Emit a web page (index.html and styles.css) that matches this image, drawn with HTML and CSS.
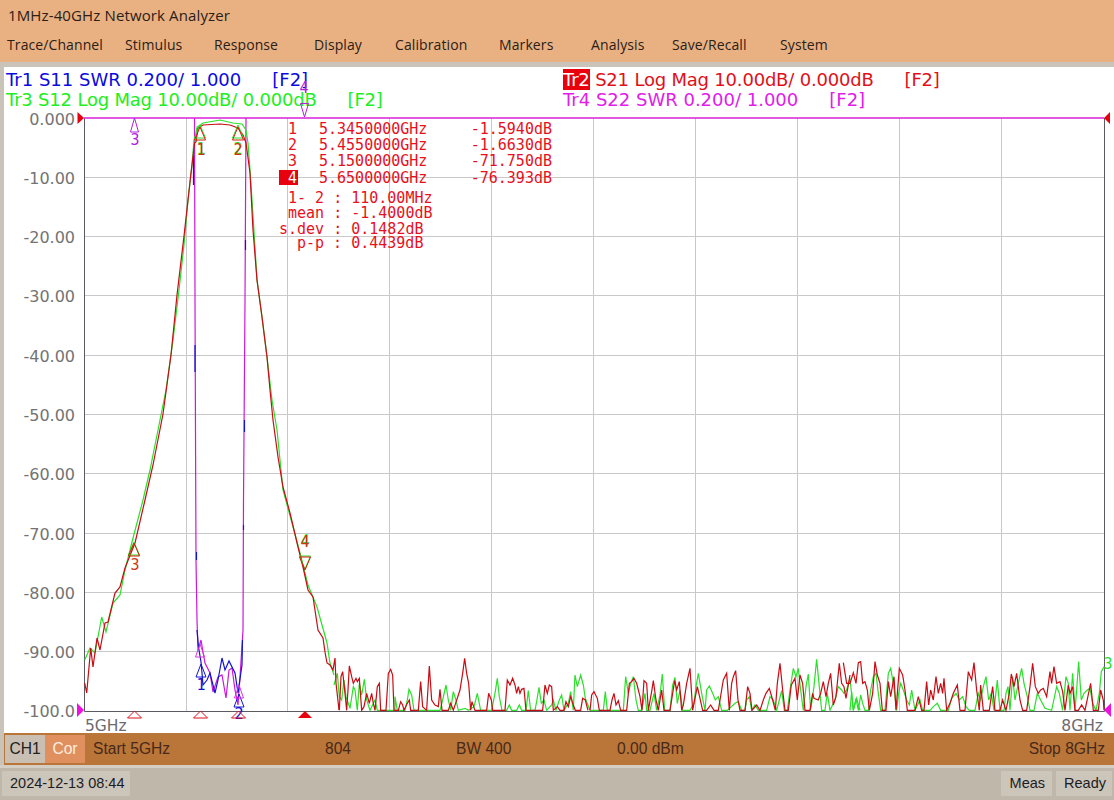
FILE: index.html
```html
<!DOCTYPE html>
<html lang="en">
<head>
    <meta charset="UTF-8">
    <title>1MHz-40GHz Network Analyzer</title>
    <link rel="stylesheet" href="styles.css">
</head>
<body>
    <header class="top">
        <div class="title">1MHz-40GHz Network Analyzer</div>
        <nav class="menu">
            <span>Trace/Channel</span>
            <span>Stimulus</span>
            <span>Response</span>
            <span>Display</span>
            <span>Calibration</span>
            <span>Markers</span>
            <span>Analysis</span>
            <span>Save/Recall</span>
            <span>System</span>
        </nav>
    </header>

    <main class="screen">
        <div class="traces">
            <div class="trace tr1"><span>Tr1 S11 SWR 0.200/ 1.000</span><span>[F2]</span></div>
            <div class="trace tr2"><span><b>Tr2</b> S21 Log Mag 10.00dB/ 0.000dB</span><span>[F2]</span></div>
            <div class="trace tr3"><span>Tr3 S12 Log Mag 10.00dB/ 0.000dB</span><span>[F2]</span></div>
            <div class="trace tr4"><span>Tr4 S22 SWR 0.200/ 1.000</span><span>[F2]</span></div>
        </div>

        <!-- viewBox uses page coordinates so values can be read straight off the screen -->
        <svg class="plot" viewBox="4 118 1110 615" width="1110" height="615">
            <g class="grid">
                <path d="M84 177.500H1104M84 236.500H1104M84 295.500H1104M84 355.500H1104M84 414.500H1104M84 473.500H1104M84 533.500H1104M84 592.500H1104M84 651.500H1104"/>
                <path d="M186.500 118V711M287.500 118V711M389.500 118V711M491.500 118V711M593.500 118V711M695.500 118V711M797.500 118V711M899.500 118V711M1001.500 118V711"/>
            </g>
            <path class="frame" d="M84.500 118V711.500H1104.500V118"/>

            <g class="axis">
                <text x="75" y="125">0.000</text>
                <text x="75" y="184">-10.00</text>
                <text x="75" y="243">-20.00</text>
                <text x="75" y="302">-30.00</text>
                <text x="75" y="362">-40.00</text>
                <text x="75" y="421">-50.00</text>
                <text x="75" y="480">-60.00</text>
                <text x="75" y="540">-70.00</text>
                <text x="75" y="599">-80.00</text>
                <text x="75" y="658">-90.00</text>
                <text x="75" y="717">-100.0</text>
            </g>
            <text class="freq" x="85" y="731">5GHz</text>
            <text class="freq end" x="1103" y="731">8GHz</text>

            <!-- S22 and S11 -->
            <polyline class="magenta" points="194.500,118 195,300 196,560 197,620 198,650 201,640 203,652 205,663 210,673 213,692 218,677 222,675 226,698 229,670 232,668 235,690 238,705 240,677 243,630 243.500,500 245,300 246,118"/>
            <polyline class="blue" points="197,630 198.500,647 201,662 202,673 203,685 207,680 210,673 215,693 218,680 222,658 225,670 229,661 235,673 238,693 242,665 242.500,640"/>
            <path class="blue" d="M193.500 155V185M195 345V372M196.500 552V560M245.500 240V250M244.500 420V432M243.500 525V530"/>
            <path class="top-line" d="M84 118H1104"/>

            <!-- S12 -->
            <polyline class="green" points="84.700,660 90,648 95,653 101.700,617 106,632 113,603 120,595 125,570 132,542 143,500 150,470 158,430 166,390 173,340 179,290 184,245 188,200 192,165 194,140 195,138 197,127 203,123 220,120 233,123 242,124 246,130 248,143 250,170 253,215 257,280 262,317 267,357 272,400 277,430 283,490 292,523 300,553 308,585 317,607 327,643 330,663 334,675"/>
            <g class="scaled" transform="translate(320 650) scale(.3333)">
                <polyline class="green" points="42,105 52,70 58,140 65,150 72,90 78,140 90,175 100,110 105,120 112,181 118,100 125,135 133,88 140,150 150,181 165,150 172,181 225,181 225,140 232,181 255,181 262,150 267,118 275,135 282,181 360,181 368,150 378,105 385,150 392,181 400,125 408,150 415,181 435,175 445,181 462,170 472,130 482,181 515,181 525,130 532,85 538,140 546,181 560,181 568,165 575,181 590,181 598,165 605,181 618,181 625,122 632,181 645,181 650,155 657,112 664,160 672,150 680,181 695,165 700,150 708,181 718,150 725,135 732,181 745,160 752,125 760,181 765,75 772,110 782,75 790,105 796,145 810,181"/>
            </g>
            <g class="scaled" transform="translate(590 650) scale(.3333)">
                <polyline class="green" points="0,181 40,181 46,125 52,181 100,181 107,80 115,130 122,100 130,80 138,150 145,181 155,181 165,130 170,181 180,181 192,130 200,181 210,135 217,72 224,181 240,181 248,105 255,82 262,160 270,120 278,181 300,181 312,160 318,110 325,70 335,130 345,181 350,120 358,108 368,130 376,150 385,140 395,181 412,181 435,160 445,155 455,181 465,181 470,150 478,140 485,181 495,165 505,181 530,181 540,140 550,150 560,181 568,150 575,122 583,181 592,181 600,120 610,55 618,80 625,55 632,120 640,181 648,110 655,72 662,181 672,110 680,28 688,110 695,181 705,181 712,130 720,181 735,150 745,110 755,120 762,130 770,120 780,85 790,181 800,145 810,181"/>
            </g>
            <g class="scaled" transform="translate(850 650) scale(.3333)">
                <polyline class="green" points="0,181 5,125 10,181 18,145 25,181 32,135 38,160 45,181 55,181 62,120 70,80 78,70 85,130 92,181 105,181 115,70 122,55 130,100 140,181 146,130 152,100 160,120 170,150 178,165 185,120 195,181 210,150 218,181 240,181 250,170 262,160 272,181 295,181 305,145 318,130 328,150 338,140 348,170 358,181 375,181 385,130 392,150 400,110 408,80 416,150 424,130 432,181 442,90 450,181 462,181 468,130 474,110 480,181 488,80 495,150 505,100 515,55 522,100 532,140 540,181 552,181 562,130 572,150 585,175 605,181 620,110 628,130 638,181 648,80 655,100 660,181 668,70 675,181 680,120 686,35 694,150 702,130 712,120 720,115 728,160 738,181 748,130 754,65 762,50"/>
            </g>

            <!-- S21 -->
            <polyline class="red" points="84.700,683 86.700,693 90.700,648 93,667 97,638 100,650 105,623 108,622 115,593 120,587 125,568 135,543 145,500 153,465 163,414 171,355 177,295 184,236 191,173 194.600,143 196,142 198,128 203,125 220,124 230,125 238,128 243,135 246,143 250,173 253,230 257,280 262,317 267,357 270,390 273,420 278,457 283,487 290,513 298,547 303,567 308,590 313,597 318,630 323,638 325,652 327,663 330,665 333,670 335,658 336,683 339,710"/>
            <g class="scaled" transform="translate(320 650) scale(.3333)">
                <polyline class="red" points="58,181 63,80 68,65 75,130 80,181 84,120 88,48 95,80 100,100 108,85 112,95 118,85 125,181 132,170 140,130 148,160 155,130 160,160 165,181 172,110 178,100 182,181 198,181 205,70 212,58 218,75 222,181 235,181 242,155 248,165 252,181 262,160 268,150 272,181 295,181 302,95 308,170 320,181 328,48 335,150 345,165 355,170 360,118 366,181 385,181 392,160 400,181 420,120 428,70 434,25 440,70 446,100 452,181 456,155 465,181 500,181 506,130 514,150 518,181 555,181 562,90 570,105 578,85 585,105 590,130 595,110 600,130 605,118 612,115 618,181 668,181 675,105 682,130 688,105 695,110 700,181 712,170 720,181 732,181 738,155 745,170 752,140 760,165 766,181 782,181 788,145 796,150 804,181"/>
            </g>
            <g class="scaled" transform="translate(590 650) scale(.3333)">
                <polyline class="red" points="0,181 5,135 12,125 22,145 28,181 60,181 66,150 72,130 78,165 85,152 92,181 110,181 118,100 125,95 132,85 140,100 150,140 156,181 162,92 170,100 175,181 185,125 190,92 198,150 205,181 215,120 222,181 240,181 248,130 254,92 260,120 268,95 275,181 280,165 290,100 300,55 308,181 312,160 322,110 330,145 338,181 350,181 362,165 372,181 385,181 395,120 400,90 410,70 418,181 425,100 430,80 437,62 444,150 450,181 465,181 473,110 480,130 486,181 500,165 510,181 520,150 528,130 538,115 548,150 556,181 562,100 570,40 578,120 585,181 595,181 604,105 615,85 622,150 630,75 638,100 645,181 660,181 668,130 672,145 685,150 692,130 700,95 708,140 715,100 722,70 730,165 738,140 748,40 755,100 762,110 768,145 775,105 780,75"/>
            </g>
            <g class="scaled" transform="translate(850 650) scale(.3333)">
                <polyline class="red" points="-20,38 -10,100 0,100 10,68 18,100 25,38 32,35 38,100 45,95 52,120 58,181 68,130 75,35 82,75 90,100 97,181 108,181 115,95 122,140 132,80 138,181 148,55 158,75 165,120 172,181 195,181 205,140 215,181 222,181 230,95 236,165 242,120 250,150 258,80 265,130 272,100 278,130 282,85 290,181 300,160 310,130 322,105 330,181 345,181 355,65 365,90 372,38 380,120 388,181 392,105 400,181 418,181 428,110 435,181 450,181 458,150 468,181 478,130 484,72 492,110 500,70 510,150 518,181 530,181 540,110 548,40 556,110 565,130 572,120 580,115 590,140 600,65 605,100 612,50 620,100 630,95 638,125 645,181 655,105 660,130 668,110 675,181 685,181 695,165 705,181 722,100 730,181 745,181 752,120 760,150 762,181"/>
            </g>

            <!-- markers on the traces -->
            <g class="mk-green">
                <path d="M200 125L194.500 138H205.500ZM238 125L232.500 138H243.500ZM134 542L128.500 555H139.500ZM305 569L299.500 556H310.500Z"/>
            </g>
            <g class="mk-red">
                <path d="M200 127L194.500 140H205.500ZM238 127L232.500 140H243.500ZM134 543L128.500 556H139.500ZM305 570L299.500 557H310.500Z"/>
            </g>
            <g class="mk-num">
                <text class="n-green" x="201" y="154">1</text>
                <text class="n-red" x="201" y="155">1</text>
                <text class="n-green" x="238" y="154">2</text>
                <text class="n-red" x="238" y="155">2</text>
                <text class="n-red" x="135" y="570">3</text>
                <text class="n-green" x="305" y="546">4</text>
                <text class="n-red" x="305" y="547">4</text>
                <text class="n-blue" x="201" y="690">1</text>
                <text class="n-blue" x="239" y="719">2</text>
                <text class="n-purple" x="135" y="145">3</text>
                <text class="n-purple" x="304" y="93">4</text>
                <text class="n-green" x="1108" y="669">3</text>
            </g>
            <path class="mk-blue" d="M201 664L196 677H206ZM239 694L234 707H244Z"/>
            <path class="mk-magenta" d="M200 644L195.500 657H204.500ZM239 685L234.500 698H243.500Z"/>
            <path class="mk-purple" d="M134.500 118L130.500 132H138.500ZM304.500 117L300.500 103.500H308.500Z"/>

            <!-- stimulus marker flags below the axis -->
            <path class="flag" d="M134.500 711L127.500 718H141.500ZM200.500 711L193.500 718H207.500ZM238.500 711L231.500 718H245.500Z"/>
            <path class="flag-on" d="M305 711L298 718H312Z"/>

            <!-- reference arrows -->
            <path class="arrow-red" d="M77.500 112L84 118L77.500 124ZM1110 112L1104 118L1110 124Z"/>
            <path class="arrow-magenta" d="M77 703L84 710L77 717ZM1111 703L1104 710L1111 717Z"/>

            <!-- marker readout -->
            <g class="readout">
                <text x="288" y="134">1</text><text x="319" y="134">5.3450000GHz</text><text class="end" x="552" y="134">-1.5940dB</text>
                <text x="288" y="150">2</text><text x="319" y="150">5.4550000GHz</text><text class="end" x="552" y="150">-1.6630dB</text>
                <text x="288" y="166">3</text><text x="319" y="166">5.1500000GHz</text><text class="end" x="552" y="166">-71.750dB</text>
                <rect class="active" x="279" y="170" width="19" height="15"/>
                <text class="on" x="288" y="183">4</text><text x="319" y="183">5.6500000GHz</text><text class="end" x="552" y="183">-76.393dB</text>
                <text x="288" y="203">1- 2 : 110.00MHz</text>
                <text x="288" y="218">mean : -1.4000dB</text>
                <text x="279" y="234">s.dev : 0.1482dB</text>
                <text x="297" y="248">p-p : 0.4439dB</text>
            </g>
        </svg>
    </main>

    <section class="channel">
        <span class="ch-tag">CH1</span>
        <span class="cor-tag">Cor</span>
        <span class="ch-start">Start 5GHz</span>
        <span class="ch-points">804</span>
        <span class="ch-bw">BW 400</span>
        <span class="ch-power">0.00 dBm</span>
        <span class="ch-stop">Stop 8GHz</span>
    </section>

    <footer class="status">
        <span class="cell date">2024-12-13 08:44</span>
        <span class="cell meas">Meas</span>
        <span class="cell">Ready</span>
    </footer>
</body>
</html>
```

FILE: styles.css
```css
html, body {
    margin: 0;
    padding: 0;
}
body {
    width: 1114px;
    height: 800px;
    overflow: hidden;
    display: flex;
    flex-direction: column;
    background: #c9c3ba;
    font-family: "Liberation Sans", Arial, sans-serif;
}

/* title + menu */
.top {
    height: 62px;
    background: #e9b182;
    color: #2a2018;
    font-family: "Open Sans", "Noto Sans", sans-serif;
    font-size: 14px;
}
.title {
    padding: 5px 0 0 8px;
    height: 26px;
    line-height: 21px;
    font-size: 15px;
    letter-spacing: .13px;
}
.menu {
    display: grid;
    grid-template-columns: 118px 89px 100px 81px 104px 92px 81px 108px auto;
    padding: 1px 0 0 7px;
    line-height: 26px;
    letter-spacing: .1px;
}

.screen {
    height: 666px;
    margin: 5px 0 0 4px;
    background: white;
}

/* trace header */
.traces {
    height: 51px;
    box-sizing: border-box;
    padding: 3px 0 0 2px;
    display: grid;
    grid-template-columns: 557px 1fr;
    grid-auto-rows: 20px;
    font-family: "DejaVu Sans", Verdana, sans-serif;
    font-size: 18px;
    line-height: 20px;
    white-space: nowrap;
}
.trace {
    display: flex;
    gap: 31px;
}
.tr1 { color: #0a0ae0; }
.tr2 { color: #e01018; letter-spacing: -.2px; }
.tr3 { color: #20ee20; letter-spacing: -.2px; }
.tr4 { color: #e020e8; }
.tr2 b {
    font-weight: normal;
    background: #e8000c;
    color: white;
}

/* plot */
.plot {
    display: block;
    overflow: visible;
}
.plot polyline, .plot path {
    fill: none;
}
.grid path {
    stroke: #c9c9c9;
    stroke-width: 1;
}
.frame {
    stroke: #5a5a60;
    stroke-width: 1;
}
.axis text {
    font-family: "DejaVu Sans", Verdana, sans-serif;
    font-size: 16px;
    fill: #737373;
    text-anchor: end;
}
.freq {
    font-family: "DejaVu Sans", Verdana, sans-serif;
    font-size: 15.500px;
    fill: #6a6a70;
}
.end {
    text-anchor: end;
}
.top-line {
    stroke: #d820d8;
    stroke-width: 1.5;
}
.red, .green, .blue, .magenta {
    stroke-width: 1.2;
    vector-effect: non-scaling-stroke;
}
.red { stroke: #c80c14; }
.green { stroke: #2ae02a; }
.blue { stroke: #1414d0; }
.magenta { stroke: #cc18dc; }
.plot .mk-green path { stroke: #2ae02a; }
.plot .mk-red path { stroke: #cc2008; }
.plot .mk-blue { stroke: #1414d0; }
.plot .mk-magenta { stroke: #e030e0; }
.plot .mk-purple { stroke: #b020e0; }
.mk-num text {
    font-family: "DejaVu Sans Mono", monospace;
    font-size: 15px;
    text-anchor: middle;
}
.n-green { fill: #2ae02a; }
.n-red { fill: #c83810; }
.n-blue { fill: #1414d0; }
.n-purple { fill: #b020e0; }
.plot .flag { stroke: #e0101c; }
.plot .flag-on { fill: #e8000c; }
.plot .arrow-red { fill: #e8000c; }
.plot .arrow-magenta { fill: #ee10e0; }

.readout text {
    font-family: "DejaVu Sans Mono", monospace;
    font-size: 15px;
    fill: #e8101c;
    white-space: pre;
}
.readout .on { fill: white; }
.readout .active { fill: #e8000c; }

/* channel bar */
.channel {
    height: 32px;
    margin-left: 4px;
    box-sizing: border-box;
    padding: 2px 9px 2px 1px;
    display: flex;
    align-items: stretch;
    line-height: 28px;
    font-size: 15.600px;
    background: #ba7638;
    color: #46291a;
}
.ch-tag {
    width: 40px;
    text-align: center;
    background: #c9c0b3;
    color: #222;
}
.cor-tag {
    width: 40px;
    text-align: center;
    background: #e08f5e;
    color: #fdf0e0;
}
.ch-start { margin-left: 8px; width: 232px; }
.ch-points { width: 131px; }
.ch-bw { width: 161px; }
.ch-stop { margin-left: auto; }

/* status bar */
.status {
    flex: 1;
    padding: 3px 2px 4px;
    border-top: 3px solid #d4cec5;
    display: flex;
    gap: 4px;
    font-size: 14.500px;
    line-height: 25px;
    color: #1c1c24;
    background: #bfb7aa;
}
.cell {
    background: #cbc5ba;
    padding: 0 6px 0 8px;
}
.date { padding-right: 5px; }
.meas {
    margin-left: auto;
    padding: 0 7px 0 9px;
}
```
